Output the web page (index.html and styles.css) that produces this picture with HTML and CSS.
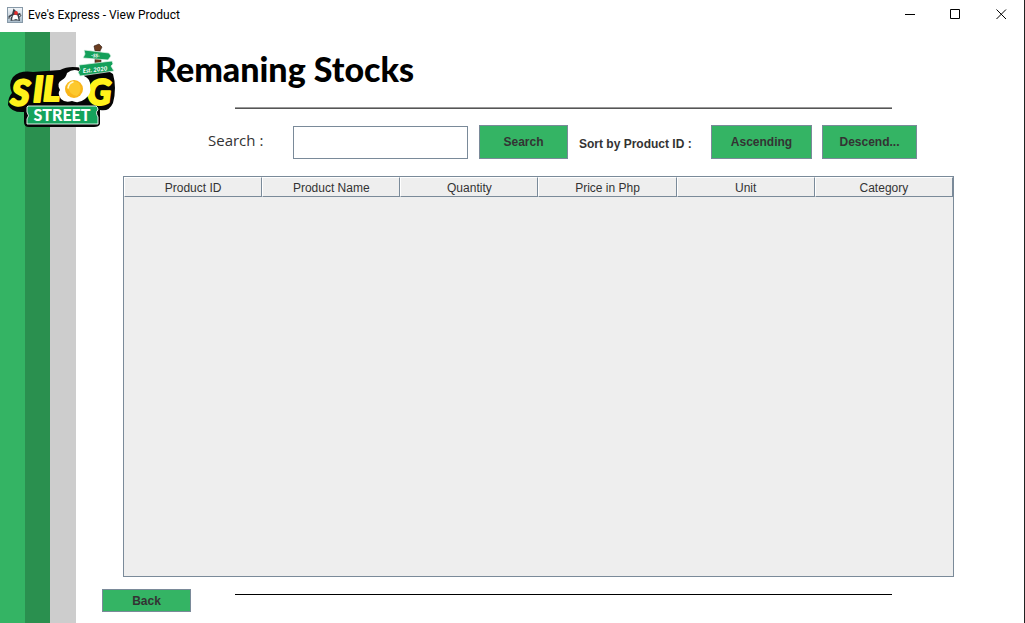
FILE: index.html
```html
<!DOCTYPE html>
<html lang="en">
<head>
<meta charset="utf-8">
<title>Eve's Express - View Product</title>
<link rel="stylesheet" href="styles.css">
</head>
<body>
<div class="window">
  <header class="titlebar">
    <svg class="app-icon" viewBox="0 0 16 16" aria-hidden="true">
      <defs><linearGradient id="tile" x1="0" y1="0" x2="0" y2="1"><stop offset="0" stop-color="#f4f7fa"/><stop offset="1" stop-color="#a9bccb"/></linearGradient></defs>
      <rect x=".5" y=".5" width="15" height="15" fill="url(#tile)" stroke="#8799a8"/>
      <path d="M6.500 1.500L9 4L11 6.500L13 6L14.500 8.500L12.500 10.500L13 14L10.500 13.500H6L3.500 14L4 11L1.500 12L1.500 9L5 7Z" fill="#3a424a"/>
      <path d="M6 8.500Q8 7 10.500 8.500L11.500 13L9 12L6 13L5 12.500Z" fill="#fff"/>
      <path d="M2.500 11L4.500 9.500M12 9L13.500 8" stroke="#fff"/>
      <circle cx="9" cy="6" r="1.900" fill="#e52b2b"/>
    </svg>
    <span class="app-title">Eve's Express - View Product</span>
    <div class="window-controls">
      <button class="control" aria-label="Minimize"><svg viewBox="0 0 11 11"><path d="M1 5.500H11"/></svg></button>
      <button class="control" aria-label="Maximize"><svg viewBox="0 0 11 11"><path d="M.5 .5H9.500V9.500H.5Z"/></svg></button>
      <button class="control" aria-label="Close"><svg viewBox="0 0 11 11"><path d="M.5 .5L10 10M10 .5L.5 10"/></svg></button>
    </div>
  </header>
  <div class="content">
    <aside class="stripes">
      <div class="stripe stripe-light"></div>
      <div class="stripe stripe-dark"></div>
      <div class="stripe stripe-grey"></div>
      <svg class="logo" viewBox="6 40 112 90" role="img" aria-label="Silog Street">
        <path d="M95 52H101V80H95Z" fill="#6b3d20" stroke="#1c1c1c" stroke-width=".6"/>
        <path d="M94 46L99 44L102 47L100 51L95 51Z" fill="#6b3d20" stroke="#2c1a10" stroke-width=".6"/>
        <path d="M84 50L109 53L111 56L108 60L83 58L85 54Z" fill="#14a05a" stroke="#e7f5ec" stroke-width=".7"/>
        <text class="sign-text" x="91" y="57" font-size="5" transform="rotate(5 91 57)">-SS-</text>
        <path d="M13 77Q20 70 33 72L60 70Q69 65 82 68Q94 64 93 73Q103 67 113 74Q117 88 113 103Q109 112 100 110L100 124Q99 127 94 127H29Q24 127 24 122L24 112Q12 113 8 105Q8 97 12 93Q8 84 13 77Z" fill="#050505"/>
        <text class="logo-letter" x="10" y="105" font-size="36" transform="rotate(5 14 105)">S</text>
        <text class="logo-letter" x="33" y="102" font-size="36">I</text>
        <text class="logo-letter" x="43" y="101" font-size="35">L</text>
        <text class="logo-letter" x="87" y="105" font-size="36">G</text>
        <path d="M62 80Q66 78 67 73Q73 68 79 71Q84 70 84 76Q91 79 90 86Q92 94 85 99Q79 104 72 101Q65 103 61 99Q57 93 60 90Q56 83 62 80Z" fill="#fff"/>
        <circle cx="74" cy="89" r="9" fill="#f9b51a"/>
        <path d="M67 85Q71 78 79 83Q83 91 77 96Q69 95 67 85Z" fill="#fdc92e"/>
        <path d="M68 88Q69 83 73 82" fill="none" stroke="#fff8cf" stroke-width="1.500" stroke-linecap="round"/>
        <path d="M79 65L112 61L113 64L111 66L114 71L80 76L78 72L80 70Z" fill="#14a05a" stroke="#e7f5ec" stroke-width=".7"/>
        <text class="sign-text" x="83" y="73" font-size="6" transform="rotate(-6 83 73)">Est. 2020</text>
        <path d="M28 106H96Q98 107 98 110Q95 112 98 117V124H27V119Q30 116 27 112V107Z" fill="#15a35c" stroke="#f5fff9" stroke-width=".9"/>
        <text class="street-text" x="62" y="121" font-size="16">STREET</text>
      </svg>
    </aside>
    <main class="main">
      <h1 class="heading">Remaning Stocks</h1>
      <hr class="rule rule-soft">
      <form class="toolbar">
        <label class="search-label" for="query">Search :</label>
        <input class="search-input" id="query" type="text">
        <button class="button search-button" type="button">Search</button>
        <span class="sort-label">Sort by Product ID :</span>
        <button class="button ascending" type="button">Ascending</button>
        <button class="button descending" type="button">Descend...</button>
      </form>
      <div class="table-pane">
        <table class="stock-table">
          <thead><tr><th>Product ID</th><th>Product Name</th><th>Quantity</th><th>Price in Php</th><th>Unit</th><th>Category</th></tr></thead>
          <tbody></tbody>
        </table>
      </div>
      <footer class="footer">
        <button class="button back" type="button">Back</button>
        <hr class="rule footer-rule">
      </footer>
    </main>
  </div>
</div>
</body>
</html>
```
FILE: styles.css
```css
* { box-sizing: border-box; }
body { margin: 0; background: #fff; font-family: "Liberation Sans", Arial, sans-serif; color: #333; }
.window { min-height: 100vh; display: flex; flex-direction: column; border-right: 1px solid #222; }
.titlebar { height: 32px; display: flex; align-items: center; padding-left: 7px; padding-bottom: 3px; }
.app-icon { width: 16px; height: 16px; margin-right: 5px; }
.app-title { font: 12px/16px Roboto, sans-serif; color: #000; }
.window-controls { display: flex; margin-left: auto; }
.control { width: 46px; height: 28px; padding: 0; border: 0; background: none; display: flex; align-items: center; justify-content: center; }
.control svg { width: 11px; height: 11px; fill: none; stroke: #000; stroke-width: 1; }
.content { flex: 1; display: flex; }
.stripes { position: relative; flex: none; width: 76px; display: flex; }
.stripe-light { width: 25px; background: #34b464; }
.stripe-dark { width: 25px; background: #2a904f; }
.stripe-grey { width: 26px; background: #cdcdcd; }
.logo { position: absolute; left: 6px; top: 8px; width: 112px; height: 90px; }
.logo-letter { font-family: Lato, sans-serif; font-weight: 900; font-style: italic; fill: #fff21a; stroke: #fff21a; stroke-width: 2; stroke-linejoin: round; }
.sign-text { font-family: Lato, sans-serif; font-weight: 900; font-style: italic; fill: #fff; }
.street-text { font-family: Lato, sans-serif; font-weight: 900; fill: #fff; text-anchor: middle; }
.main { flex: 1; min-width: 0; display: flex; flex-direction: column; padding: 15px 70px 11px 26px; }
.heading { margin: 0 0 16px 53px; font: 900 34px/44px Lato, sans-serif; color: #000; }
.rule { margin: 0 62px 0 133px; border: 0; height: 1px; background: #000; }
.rule-soft { height: 2px; border-top: 1px solid #999; background: #555; }
.toolbar { display: flex; align-items: center; margin: 16px 0 17px 106px; height: 34px; }
.search-label { width: 85px; font: 15px/20px "Open Sans", sans-serif; padding-bottom: 4px; }
.search-input { width: 175px; height: 33px; border: 1px solid #7a8a99; border-radius: 0; padding: 4px; font: inherit; background: #fff; }
.button { flex: none; padding: 0; border: 1px solid #7a8a99; border-radius: 0; background: #34b464; color: #333; font: bold 12px/14px "Liberation Sans", Arial, sans-serif; }
.search-button { width: 89px; height: 34px; margin: 0 11px; }
.sort-label { width: 132px; font-size: 12px; font-weight: bold; line-height: 14px; padding-top: 4px; }
.ascending { width: 101px; height: 34px; margin-right: 10px; }
.descending { width: 95px; height: 34px; }
.table-pane { flex: 1; margin-left: 21px; border: 1px solid #7a8a99; background: #eee; }
.stock-table { width: 100%; table-layout: fixed; border-spacing: 0; }
.stock-table th { height: 20px; padding: 2px 0 0; border: 1px solid #fff; border-right-color: #7a8a99; border-bottom-color: #7a8a99; font-size: 12px; font-weight: normal; line-height: 14px; }
.footer { display: flex; align-items: flex-start; padding-top: 12px; }
.back { width: 89px; height: 23px; }
.footer-rule { flex: 1; margin: 5px 62px 0 44px; }
```
